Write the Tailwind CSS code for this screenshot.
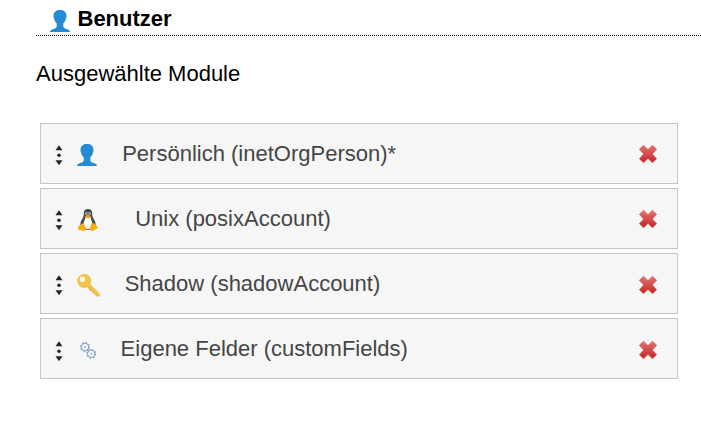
<!DOCTYPE html>
<html lang="de">
<head>
    <meta charset="UTF-8">
    <title>Benutzer - Ausgewählte Module</title>
    <meta name="viewport" content="width=device-width, initial-scale=1.0">
    <script src="https://cdn.jsdelivr.net/npm/@tailwindcss/browser@4"></script>
</head>
<body class="bg-white text-black font-['Liberation_Sans',Arial,sans-serif] text-[22px] leading-[26px] overflow-hidden">
    <svg class="absolute size-0">
        <defs>
            <linearGradient id="rot" x1="0" y1="0" x2="0" y2="1">
                <stop offset="0" stop-color="#e37474"/>
                <stop offset="1" stop-color="#c32424"/>
            </linearGradient>
            <symbol id="person" viewBox="0 0 20 22">
                <path fill="#268bd2" d="M10 0C6 0 3.700 2 3.700 5.200C3.300 5.500 3.300 7.200 4 8.200C4.400 10.400 5.200 12 6.700 13.400V16.300C6.700 18.200 4.500 18.500 2.500 19.300C1 19.900 .2 20.600 0 22H20C19.800 20.600 19 19.900 17.500 19.300C15.500 18.500 13.300 18.200 13.300 16.300V13.400C14.800 12 15.600 10.400 16 8.200C16.700 7.200 16.700 5.500 16.300 5.200C16.300 2 14 0 10 0Z"/>
            </symbol>
            <symbol id="griff" viewBox="0 0 8 22">
                <path fill="#232629" d="M4 1.300L7.500 6.300H.5ZM4 21.300L7.500 16.300H.5Z"/>
                <circle cx="4" cy="11.300" r="1.800" fill="#232629"/>
            </symbol>
            <symbol id="loeschen" viewBox="0 0 20 20">
                <path fill="url(#rot)" stroke="#c94b4b" stroke-width=".5" stroke-linejoin="round" d="M5.500 1.300L10 5.500L14.500 1.300L18.700 5.300L14.400 10L18.700 14.700L14.500 18.700L10 14.500L5.500 18.700L1.300 14.700L5.600 10L1.300 5.300Z"/>
            </symbol>
        </defs>
    </svg>

    <h1 class="ml-9 h-9 pl-[13.5px] flex items-start border-b border-dotted border-black font-bold">
        <svg class="w-5 h-[22px] mt-[10px]"><use href="#person"/></svg>
        <span class="ml-2 mt-[6px]">Benutzer</span>
    </h1>
    <p class="ml-9 mt-[25px]">Ausgewählte Module</p>

    <ul class="ml-10 mt-9 w-[638px] flex flex-col gap-1 text-[#454545]">
        <li class="h-[61px] flex items-center bg-[#f6f6f6] border border-[#c5c5c5] pl-[14px] pr-[19px]">
            <svg class="w-2 h-[22px] mt-[3px]"><use href="#griff"/></svg>
            <svg class="w-5 h-[22px] mt-[3px] ml-[14.400px]"><use href="#person"/></svg>
            <span class="ml-[24.800px]">Persönlich (inetOrgPerson)*</span>
            <svg class="w-5 h-5 ml-auto"><use href="#loeschen"/></svg>
        </li>
        <li class="h-[61px] flex items-center bg-[#f6f6f6] border border-[#c5c5c5] pl-[14px] pr-[19px]">
            <svg class="w-2 h-[22px] mt-[3px]"><use href="#griff"/></svg>
            <svg class="w-5 h-[22px] mt-[3px] ml-[15px]" viewBox="0 0 20 22">
                <path fill="#45484a" d="M10 0C7 0 5.700 1.700 5.800 4.500C5.900 7.200 5.200 8.500 4 10.500C2.500 12.800 2 15 2.400 17.500L8 20.800H12L17.600 17.500C18 15 17.500 12.800 16 10.500C14.800 8.500 14.100 7.200 14.200 4.500C14.300 1.700 13 0 10 0Z"/>
                <path fill="#fff" d="M7.500 8C7.200 10.500 5.500 12.800 5.500 15.500C5.500 18.500 7.500 20 10 20S14.500 18.500 14.500 15.500C14.500 12.800 12.800 10.500 12.500 8Z"/>
                <ellipse cx="8.400" cy="4.600" rx="1.400" ry="1.700" fill="#bdbdbd"/>
                <ellipse cx="11.600" cy="4.600" rx="1.400" ry="1.700" fill="#bdbdbd"/>
                <circle cx="8.700" cy="4.800" r=".6" fill="#333"/>
                <circle cx="11.300" cy="4.800" r=".6" fill="#333"/>
                <path fill="#efa51d" d="M7 6.900L10 5.700L13 6.900L12 8.700L10 9.500L8 8.700Z"/>
                <path fill="#f2ae0c" d="M3.600 14.200C4.900 14 6.300 16.500 7.800 18.300C9.100 20.200 7.500 22.200 5.300 21.800L.7 20.700C-.4 20.300 .6 18.900 .3 17.600C.1 16.300 2.600 16.600 3.600 14.200ZM16.400 14.400C15 14.200 13.200 14.500 12.700 15.900L12.200 20.300C12.300 22.200 14.300 22.600 15.800 21.300L19.600 19.100C20.600 18.300 19 17.500 18.400 16.800C17.900 16.200 17.800 14.900 16.400 14.400Z"/>
            </svg>
            <span class="ml-[37.200px]">Unix (posixAccount)</span>
            <svg class="w-5 h-5 ml-auto"><use href="#loeschen"/></svg>
        </li>
        <li class="h-[61px] flex items-center bg-[#f6f6f6] border border-[#c5c5c5] pl-[14px] pr-[19px]">
            <svg class="w-2 h-[22px] mt-[3px]"><use href="#griff"/></svg>
            <svg class="w-[23px] h-[23px] mt-[3px] ml-[13.500px]" viewBox="0 0 23 23">
                <path fill="#e69138" d="M11 12.500V14.500H13V16.500H14.700L15.200 18.500H17L17.500 20.300H19.300L20.500 22.300H22.300L14 11Z"/>
                <path fill="#f2c34b" fill-rule="evenodd" d="M7 0A7 7 0 1 0 9.500 13.600L11.300 13L20.800 22.300H22.800V19.800L13.300 10.300A7 7 0 0 0 7 0ZM5.500 2.600A2.700 2.700 0 1 1 5.500 8A2.700 2.700 0 0 1 5.500 2.600Z"/>
                <path fill="#e69138" d="M12.500 14.500L20.500 22.300H18.800V20.600H17V18.600H15V16.600H12.500Z"/>
            </svg>
            <span class="ml-[25.200px]">Shadow (shadowAccount)</span>
            <svg class="w-5 h-5 ml-auto mt-[2px]"><use href="#loeschen"/></svg>
        </li>
        <li class="h-[61px] flex items-center bg-[#f6f6f6] border border-[#c5c5c5] pl-[14px] pr-[19px]">
            <svg class="w-2 h-[22px] mt-1"><use href="#griff"/></svg>
            <svg class="w-4 h-[17px] mt-1 ml-[17px]" viewBox="0 0 16 17" fill="none" stroke="#7499c1">
                <circle cx="5" cy="5" r="3.700" stroke-width=".9"/>
                <circle cx="5" cy="5" r="4.400" stroke-width="1.100" stroke-dasharray="1.500 1.950"/>
                <circle cx="5" cy="5" r=".5"/>
                <circle cx="11.200" cy="11.800" r="3.700" stroke-width=".9"/>
                <circle cx="11.200" cy="11.800" r="4.400" stroke-width="1.100" stroke-dasharray="1.500 1.950"/>
                <circle cx="11.200" cy="11.800" r=".5"/>
            </svg>
            <span class="ml-[24.600px]">Eigene Felder (customFields)</span>
            <svg class="w-5 h-5 ml-auto mt-[2px]"><use href="#loeschen"/></svg>
        </li>
    </ul>
</body>
</html>
